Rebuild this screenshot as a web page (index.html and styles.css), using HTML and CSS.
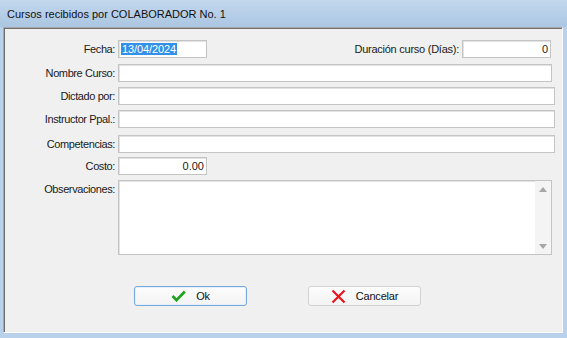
FILE: index.html
```html
<!DOCTYPE html>
<html lang="es">
<head>
  <meta charset="UTF-8" />
  <title>Cursos recibidos por COLABORADOR No. 1</title>
  <link rel="stylesheet" href="styles.css">
</head>
<body>
  <div class="titlebar">Cursos recibidos por COLABORADOR No. 1</div>

  <div class="client">
    <div class="form">
      <div class="row row-top">
        <label class="lbl">Fecha:</label>
        <div class="field short"><span class="sel">13/04/2024</span></div>
        <div class="spacer"></div>
        <label class="lbl-inline">Duración curso (Días):</label>
        <div class="field short num dur">0</div>
      </div>

      <div class="row">
        <label class="lbl">Nombre Curso:</label>
        <div class="field wide narrow"></div>
      </div>

      <div class="row">
        <label class="lbl">Dictado por:</label>
        <div class="field wide"></div>
      </div>

      <div class="row">
        <label class="lbl">Instructor Ppal.:</label>
        <div class="field wide"></div>
      </div>

      <div class="row row-comp">
        <label class="lbl">Competencias:</label>
        <div class="field wide"></div>
      </div>

      <div class="row row-costo">
        <label class="lbl">Costo:</label>
        <div class="field short num">0.00</div>
      </div>

      <div class="row row-obs">
        <label class="lbl lbl-top">Observaciones:</label>
        <div class="memo narrow">
          <div class="memo-body"></div>
          <div class="scroll">
            <span class="arrow up"></span>
            <span class="arrow down"></span>
          </div>
        </div>
      </div>
    </div>

    <div class="actions">
      <button class="btn btn-default">
        <svg width="15" height="12" viewBox="0 0 15 12"><polyline points="1.5,6 5.5,10.2 13.8,1.5" fill="none" stroke="#1ca51c" stroke-width="2.6"/></svg>
        <span>Ok</span>
      </button>
      <button class="btn">
        <svg width="15" height="15" viewBox="0 0 15 15"><path d="M1.5 1.5 L13.5 13.5 M13.5 1.5 L1.5 13.5" stroke="#e8141c" stroke-width="2.2" fill="none"/></svg>
        <span>Cancelar</span>
      </button>
    </div>
  </div>
</body>
</html>
```

FILE: styles.css
```css
* {
  margin: 0;
  padding: 0;
  box-sizing: border-box;
}
body {
  width: 567px;
  height: 338px;
  overflow: hidden;
  background: #b9d1ea;
  font-family: 'Liberation Sans', Arial, sans-serif;
  font-size: 11px;
  color: #1a1a1a;
}
.titlebar {
  height: 27px;
  padding: 8px 0 0 7px;
  background: linear-gradient(#c3d7ed, #abc6e2);
  color: #111;
  font-size: 11px;
}
.client {
  height: 306px;
  margin: 0 4px 0 3px;
  background: #f0f0f0;
  border-top: 1px solid #a8a8a8;
  border-left: 1px solid #a8a8a8;
  border-right: 1px solid #f7f9fb;
  border-bottom: 1px solid #fbfbfb;
  box-shadow: inset 1px 1px 0 #6e6e6e;
}
.form {
  display: flex;
  flex-direction: column;
  gap: 5px;
  padding: 12px 7px 0 0;
}
.row {
  display: flex;
  align-items: center;
}
.row-top {
  margin-bottom: 1px;
}
.row-comp {
  margin-top: 2px;
}
.row-costo {
  margin-top: -1px;
}
.row-obs {
  align-items: flex-start;
}
.lbl {
  width: 114px;
  flex: none;
  padding-right: 3px;
  text-align: right;
  letter-spacing: -0.4px;
}
.lbl-top {
  padding-top: 3px;
}
.lbl-inline {
  padding-right: 3px;
  letter-spacing: -0.25px;
}
.spacer {
  flex: 1;
}
.field {
  height: 18px;
  background: #fff;
  border: 1px solid #c4c4c4;
  box-shadow: inset 1px 1px 0 #e2e2e2;
  padding: 2px 2px 0 2px;
  line-height: 13px;
}
.short {
  width: 89px;
}
.wide {
  flex: 1;
}
.narrow {
  margin-right: 3px;
}
.dur {
  margin-right: 4px;
}
.num {
  text-align: right;
}
.sel {
  background: #3390e8;
  color: #fff;
  padding: 0 1px;
  letter-spacing: -0.1px;
}
.memo {
  flex: 1;
  height: 75px;
  display: flex;
  background: #fff;
  border: 1px solid #c4c4c4;
  box-shadow: inset 1px 1px 0 #e2e2e2;
}
.memo-body {
  flex: 1;
}
.scroll {
  width: 16px;
  background: #f4f4f4;
  display: flex;
  flex-direction: column;
  justify-content: space-between;
  align-items: center;
  padding: 6px 0 5px;
}
.arrow {
  width: 0;
  height: 0;
  border-left: 4px solid transparent;
  border-right: 4px solid transparent;
}
.up {
  border-bottom: 5px solid #a6a6a6;
}
.down {
  border-top: 5px solid #a6a6a6;
}
.actions {
  display: flex;
  gap: 61px;
  margin: 31px 0 0 130px;
}
.btn {
  width: 113px;
  height: 20px;
  display: flex;
  align-items: center;
  justify-content: center;
  gap: 10px;
  background: linear-gradient(#fdfdfd, #f3f3f3);
  border: 1px solid #d2d2d2;
  border-radius: 3px;
  font-family: 'Liberation Sans', Arial, sans-serif;
  font-size: 11px;
  letter-spacing: -0.2px;
  color: #111;
}
.btn-default {
  border: 1px solid #74a9de;
  box-shadow: inset 0 0 0 1px #e6f0fa;
}
```
